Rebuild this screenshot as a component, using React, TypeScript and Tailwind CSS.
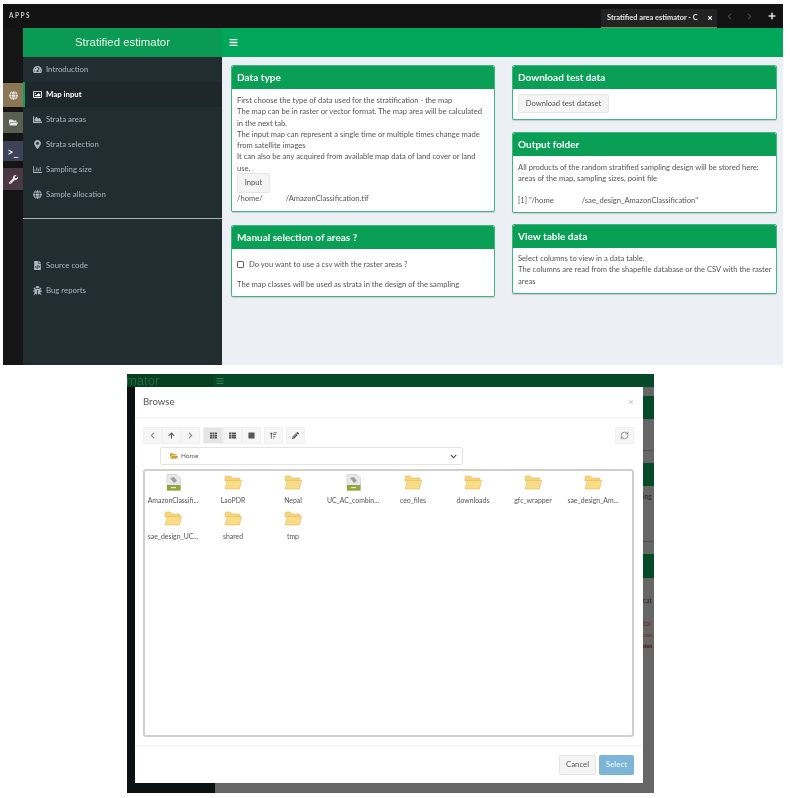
import React from "react";
import {
  FaTachometerAlt, FaRegImage, FaChartArea, FaMapMarkerAlt, FaRegChartBar, FaGlobe, FaFileCode, FaBug,
  FaFolderOpen, FaWrench, FaBars, FaChevronLeft, FaChevronRight, FaArrowUp, FaTh, FaThList, FaSquare,
  FaSortAmountUp, FaPencilAlt, FaChevronDown, FaPlus, FaTimes,
} from "react-icons/fa";
import { RefreshCw } from "lucide-react";

function Card({ title, children, className = "" }: { title: string; children: React.ReactNode; className?: string }) {
  return (
    <div className={`flex flex-col bg-white border border-[#3fb583] rounded-[2px] shadow-[0_1px_1px_rgba(0,0,0,0.15)] ${className}`}>
      <div className="h-[23px] shrink-0 bg-[#09a056] px-[5px] flex items-center text-white text-[10px] font-bold rounded-t-[2px]">{title}</div>
      <div className="flex-1 px-[5px] text-[7.6px] leading-[11.3px] text-[#555]">{children}</div>
    </div>
  );
}

function NavItem({ icon, label, active }: { icon: React.ReactNode; label: string; active?: boolean }) {
  return (
    <div className={`h-[25px] flex items-center text-[7.8px] ${active ? "bg-[#1e282c] text-white font-bold border-l-[2px] border-[#00a65a] pl-[8px]" : "text-[#a9b7be] pl-[10px]"}`}>
      <span className="w-[13px] flex justify-start text-[9px]">{icon}</span>
      <span>{label}</span>
    </div>
  );
}

function Rail({ color, children }: { color: string; children: React.ReactNode }) {
  return <div className={`w-[20px] flex items-center justify-center text-[#e8e8e8] text-[9px] ${color}`}>{children}</div>;
}

function ToolBtn({ children, active, width = "w-[19px]" }: { children: React.ReactNode; active?: boolean; width?: string }) {
  return (
    <div className={`${width} h-[17px] flex items-center justify-center text-[7px] text-[#555] border border-[#f0f0f0] ${active ? "bg-[#e4e4e4] border-[#d4d4d4]" : "bg-[#f6f6f6]"}`}>
      {children}
    </div>
  );
}

function FolderIcon() {
  return (
    <svg width="18" height="15" viewBox="0 0 18 15">
      <path d="M1 2.5 Q1 1 2.5 1 H6.5 L8 3 H15 Q16 3 16 4 V6 H1 Z" fill="#f6d47c" stroke="#e3bb5e" strokeWidth="0.6" />
      <path d="M1 14 L3.5 5.5 H17.5 L15.5 14 Z" fill="#fbdc86" stroke="#e3bb5e" strokeWidth="0.6" />
    </svg>
  );
}

function FileIcon() {
  return (
    <svg width="15" height="17" viewBox="0 0 15 17">
      <path d="M1 0.5 H11 L14.5 4 V16.5 H1 Z" fill="#e8e8ea" stroke="#c9c9c9" strokeWidth="0.6" />
      <path d="M4 4 L8 3 L11 7 L8 9 Z" fill="#9a9ea6" />
      <rect x="1" y="11" width="13.5" height="5.5" fill="#93a63c" />
      <rect x="5" y="13" width="5" height="1.2" fill="#e6ebc8" />
    </svg>
  );
}

function FileItem({ name, file }: { name: string; file?: boolean }) {
  return (
    <div className="w-[60px] h-[36px] flex flex-col items-center">
      <div className="h-[21px] flex items-center">{file ? <FileIcon /> : <FolderIcon />}</div>
      <div className="mt-[3px] text-[6.9px] leading-[9px] text-[#555] whitespace-nowrap">{name}</div>
    </div>
  );
}

const Band = ({ green, h, children }: { green?: boolean; h: string; children?: React.ReactNode }) => (
  <div className={`${h} shrink-0 ${green ? "bg-[#054a28]" : "bg-[#666667]"}`}>{children}</div>
);

export default function App() {
  return (
    <div className="w-[790px] h-[798px] bg-white overflow-hidden pt-[4px] blur-[0.35px] [font-family:Lato,sans-serif]">
      {/* Upper screenshot */}
      <div className="ml-[3px] w-[780px] h-[361px] flex flex-col">
        <div className="h-[24px] shrink-0 bg-[#131313] flex items-center justify-between">
          <span className="pl-[6px] text-[6.5px] tracking-[1.5px] font-bold text-[#c9c9c9]">APPS</span>
          <div className="flex items-center h-full">
            <div className="w-[116px] h-[19px] mt-[5px] bg-[#232323] border-b border-[#9a7b4c] flex items-center pl-[6px] text-white text-[7.4px] font-bold">
              <span className="whitespace-nowrap w-[92px] overflow-hidden text-[#e6e6e6]">Stratified area estimator - C</span>
              <FaTimes className="ml-[8px] text-[6px]" />
            </div>
            <FaChevronLeft className="ml-[9px] text-[7px] text-[#444]" />
            <FaChevronRight className="ml-[13px] text-[7px] text-[#444]" />
            <FaPlus className="ml-[15px] mr-[7px] text-[8px] text-[#e5e5e5]" />
          </div>
        </div>
        <div className="flex-1 flex min-h-0">
          <div className="w-[20px] shrink-0 bg-[#151515] flex flex-col pt-[55px]">
            <div className="h-[24px] flex"><Rail color="bg-[#8c7754]"><FaGlobe /></Rail></div>
            <div className="h-[21px] mt-[5px] flex"><Rail color="bg-[#59604f]"><FaFolderOpen /></Rail></div>
            <div className="h-[20px] mt-[8px] flex"><Rail color="bg-[#3d4258]"><span className="text-[11px] font-bold leading-none">&gt;_</span></Rail></div>
            <div className="h-[22px] mt-[7px] flex"><Rail color="bg-[#4a3844]"><FaWrench /></Rail></div>
          </div>
          <div className="w-[199px] shrink-0 bg-[#222d32] flex flex-col">
            <div className="h-[29px] bg-[#0b9a53] text-[#e8f5ee] text-[11.4px] flex items-center justify-center [font-family:'Liberation_Sans',sans-serif]">Stratified estimator</div>
            <NavItem icon={<FaTachometerAlt />} label="Introduction" />
            <NavItem icon={<FaRegImage />} label="Map input" active />
            <NavItem icon={<FaChartArea />} label="Strata areas" />
            <NavItem icon={<FaMapMarkerAlt />} label="Strata selection" />
            <NavItem icon={<FaRegChartBar />} label="Sampling size" />
            <NavItem icon={<FaGlobe />} label="Sample allocation" />
            <div className="mt-[11px] mb-[34px] h-px bg-[#aab2b5]" />
            <NavItem icon={<FaFileCode />} label="Source code" />
            <NavItem icon={<FaBug />} label="Bug reports" />
          </div>
          <div className="flex-1 flex flex-col bg-[#ecf0f5]">
            <div className="h-[29px] shrink-0 bg-[#00a65a] flex items-center pl-[7px] text-white text-[9px]"><FaBars /></div>
            <div className="flex gap-[17px] pl-[9px] pt-[8px]">
              <div className="w-[264px] flex flex-col gap-[13px]">
                <Card title="Data type" className="h-[147px]">
                  <p className="pt-[6px]">First choose the type of data used for the stratification - the map</p>
                  <p>The map can be in raster or vector format. The map area will be calculated<br />in the next tab.</p>
                  <p>The input map can represent a single time or multiple times change made<br />from satellite images</p>
                  <p>It can also be any acquired from available map data of land cover or land<br />use.</p>
                  <div className="w-[33px] h-[20px] -mt-[1.5px] bg-[#f4f4f4] border border-[#e6e6e6] rounded-[2px] flex items-center justify-center">Input</div>
                  <p>/home/<span className="inline-block w-[23px]" />/AmazonClassification.tif</p>
                </Card>
                <Card title="Manual selection of areas ?" className="h-[72px]">
                  <div className="flex items-center pt-[10px]">
                    <span className="w-[7px] h-[7px] mr-[5px] border border-[#666] rounded-[1px] bg-white" />
                    <span>Do you want to use a csv with the raster areas ?</span>
                  </div>
                  <p className="mt-[9px]">The map classes will be used as strata in the design of the sampling</p>
                </Card>
              </div>
              <div className="w-[265px] flex flex-col">
                <Card title="Download test data" className="h-[55px]">
                  <div className="mt-[5px] w-[91px] h-[19px] bg-[#f4f4f4] border border-[#e6e6e6] rounded-[2px] flex items-center justify-center whitespace-nowrap">Download test dataset</div>
                </Card>
                <Card title="Output folder" className="h-[81px] mt-[12px]">
                  <p className="pt-[6px]">All products of the random stratified sampling design will be stored here:<br />areas of the map, sampling sizes, point file</p>
                  <p className="mt-[10px]">[1] "/home<span className="inline-block w-[28px]" />/sae_design_AmazonClassification"</p>
                </Card>
                <Card title="View table data" className="h-[70px] mt-[11px]">
                  <p className="pt-[5px]">Select columns to view in a data table.</p>
                  <p className="whitespace-nowrap">The columns are read from the shapefile database or the CSV with the raster<br />areas</p>
                </Card>
              </div>
            </div>
          </div>
        </div>
      </div>

      {/* Lower screenshot: file browser dialog */}
      <div className="ml-[127px] mt-[9px] w-[527px] h-[419px] flex flex-col">
        <div className="h-[13px] shrink-0 bg-[#054a28] flex items-center overflow-hidden">
          <span className="w-[86px] h-full bg-[#06401f] text-[#1f6a40] text-[13px] leading-[13px] whitespace-nowrap overflow-hidden [font-family:'Liberation_Sans',sans-serif] -indent-[1px]">mator</span>
          <FaBars className="ml-[3px] text-[8px] text-[#2f7a52]" />
        </div>
        <div className="flex-1 flex min-h-0">
          <div className="w-[8px] shrink-0 bg-[#0b1010]" />
          <div className="w-[508px] shrink-0 bg-white flex flex-col">
            <div className="h-[31px] shrink-0 border-b border-[#f0f0f0] flex items-center justify-between pl-[8px] pr-[9px]">
              <span className="text-[9.6px] text-[#555]">Browse</span>
              <FaTimes className="text-[6px] text-[#cfcfcf]" />
            </div>
            <div className="flex items-center mt-[9px] pl-[8px] pr-[9px]">
              <div className="flex"><ToolBtn><FaChevronLeft className="text-[#888]" /></ToolBtn><ToolBtn><FaArrowUp /></ToolBtn><ToolBtn><FaChevronRight className="text-[#888]" /></ToolBtn></div>
              <div className="flex ml-[3px]"><ToolBtn active width="w-[20px]"><FaTh /></ToolBtn><ToolBtn><FaThList /></ToolBtn><ToolBtn><FaSquare /></ToolBtn></div>
              <div className="ml-[3px]"><ToolBtn><FaSortAmountUp /></ToolBtn></div>
              <div className="ml-[3px]"><ToolBtn><FaPencilAlt /></ToolBtn></div>
              <div className="ml-auto"><ToolBtn><RefreshCw size={9} strokeWidth={1.5} /></ToolBtn></div>
            </div>
            <div className="ml-[25px] mt-[3px] w-[303px] h-[18px] border border-[#e4e4e4] rounded-[2px] flex items-center justify-between pl-[9px] pr-[5px]">
              <span className="flex items-center gap-[3px] text-[6.5px] text-[#555]"><FaFolderOpen className="text-[8px] text-[#d2a02c]" />Home</span>
              <FaChevronDown className="text-[7px] text-[#444]" />
            </div>
            <div className="ml-[8px] mt-[4px] w-[491px] h-[268px] border-2 border-[#cfcfcf] rounded-[3px]">
              <div className="-ml-[2px] pt-[1px] flex flex-wrap content-start">
                {[
                  ["AmazonClassifi...", true], ["LaoPDR"], ["Nepal"], ["UC_AC_combin...", true],
                  ["ceo_files"], ["downloads"], ["gfc_wrapper"], ["sae_design_Am..."],
                  ["sae_design_UC..."], ["shared"], ["tmp"],
                ].map(([n, f]) => <FileItem key={n as string} name={n as string} file={!!f} />)}
              </div>
            </div>
            <div className="mt-[8px] border-t border-[#f0f0f0] flex-1 flex items-start justify-end gap-[3px] pt-[9px] pr-[9px]">
              <div className="w-[37px] h-[20px] bg-[#f4f4f4] border border-[#e4e4e4] rounded-[2px] flex items-center justify-center text-[7.8px] text-[#555]">Cancel</div>
              <div className="w-[35px] h-[20px] bg-[#7db5d8] rounded-[2px] flex items-center justify-center text-[7.8px] font-bold text-[#dfeef7]">Select</div>
            </div>
          </div>
          <div className="w-[11px] shrink-0 flex flex-col text-[6.6px] leading-[11px] whitespace-nowrap">
            <Band h="h-[9px]" />
            <Band green h="h-[23px]" />
            <Band h="h-[44px]"><div className="mt-[31px] h-px bg-[#505050]" /></Band>
            <Band green h="h-[23px]" />
            <Band h="h-[68px]">
              <div className="mt-[5px] text-[#222]">ing</div>
              <div className="mt-[39px] h-px bg-[#505050]" />
            </Band>
            <Band green h="h-[24px]" />
            <Band h="h-[205px]">
              <div className="mt-[17px] text-[#222]">cat</div>
              <div className="mt-[12px] text-[#6b2525]">tor</div>
              <div className="text-[#6b2525] text-[6px]">con</div>
              <div className="text-[#4a0f0f] text-[5.6px] font-bold">den</div>
            </Band>
          </div>
        </div>
        <div className="h-[10px] shrink-0 flex">
          <div className="w-[88px] bg-[#0b1010]" />
          <div className="flex-1 bg-[#666667]" />
        </div>
      </div>
    </div>
  );
}
